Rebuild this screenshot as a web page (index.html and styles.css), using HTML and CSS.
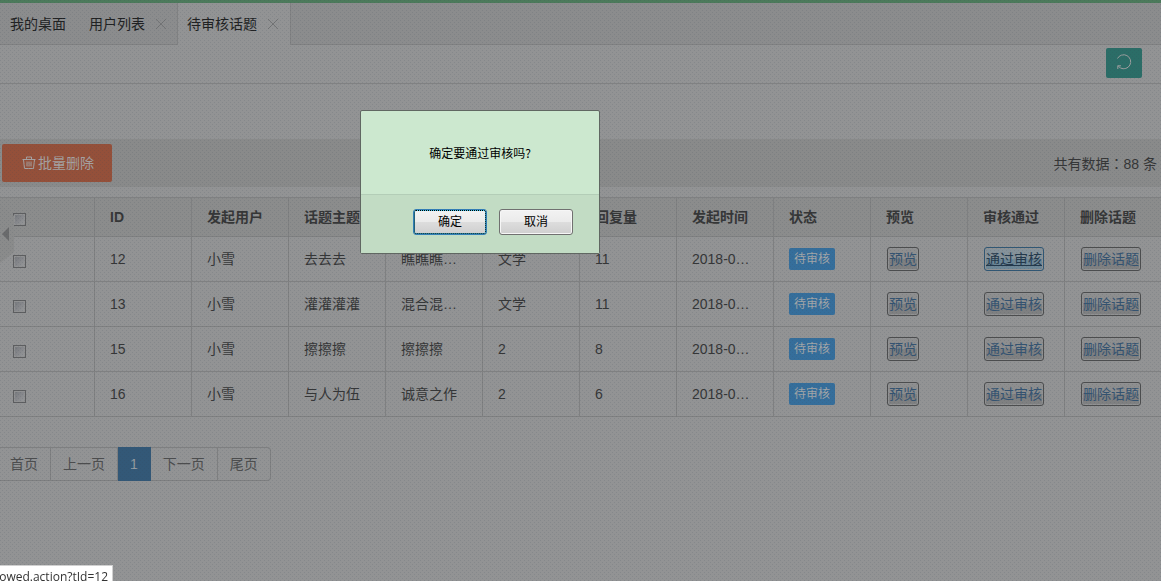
FILE: index.html
```html
<!DOCTYPE html>
<html lang="zh-CN">
<head>
<meta charset="utf-8">
<meta name="viewport" content="width=device-width, initial-scale=1">
<title>待审核话题</title>
<link rel="stylesheet" href="styles.css">
</head>
<body>
<nav class="tabs">
  <button class="tab tab-home" type="button">我的桌面</button>
  <button class="tab" type="button">用户列表<svg class="tab-close" viewBox="0 0 10 10"><path d="M0 0L10 10M10 0L0 10"/></svg></button>
  <button class="tab tab-active" type="button">待审核话题<svg class="tab-close" viewBox="0 0 10 10"><path d="M0 0L10 10M10 0L0 10"/></svg></button>
</nav>
<header class="crumbs">
  <button class="refresh" type="button" aria-label="刷新"><svg viewBox="0 0 16 16"><path d="M1.500 4.500A7 7 0 1 1 4.500 14L1.800 11.800M1.800 15V11.800H5"/></svg></button>
</header>
<main>
  <div class="toolbar">
    <button class="batch" type="button"><svg viewBox="0 0 14 14"><path d="M0.500 3.500H13.500M4.500 3V1H9.500V3M1.500 3.500L2.500 12.500H11.500L12.500 3.500M5 5.500V10.500M7 5.500V10.500M9 5.500V10.500"/></svg>批量删除</button>
    <span class="total">共有数据<span class="colon" lang="zh-TW">：</span>88 条</span>
  </div>
  <table class="topics">
    <thead>
      <tr><th><input type="checkbox" aria-label="全选"></th><th>ID</th><th>发起用户</th><th>话题主题</th><th></th><th></th><th>回复量</th><th>发起时间</th><th>状态</th><th>预览</th><th>审核通过</th><th>删除话题</th></tr>
    </thead>
    <tbody>
      <tr><td><input type="checkbox" aria-label="选择 12"></td><td>12</td><td>小雪</td><td>去去去</td><td>瞧瞧瞧…</td><td>文学</td><td>11</td><td>2018-0…</td><td><span class="label">待审核</span></td><td><a class="act" href="#">预览</a></td><td><a class="act act-hover" href="#">通过审核</a></td><td><a class="act" href="#">删除话题</a></td></tr>
      <tr><td><input type="checkbox" aria-label="选择 13"></td><td>13</td><td>小雪</td><td>灌灌灌灌</td><td>混合混…</td><td>文学</td><td>11</td><td>2018-0…</td><td><span class="label">待审核</span></td><td><a class="act" href="#">预览</a></td><td><a class="act" href="#">通过审核</a></td><td><a class="act" href="#">删除话题</a></td></tr>
      <tr><td><input type="checkbox" aria-label="选择 15"></td><td>15</td><td>小雪</td><td>擦擦擦</td><td>擦擦擦</td><td>2</td><td>8</td><td>2018-0…</td><td><span class="label">待审核</span></td><td><a class="act" href="#">预览</a></td><td><a class="act" href="#">通过审核</a></td><td><a class="act" href="#">删除话题</a></td></tr>
      <tr><td><input type="checkbox" aria-label="选择 16"></td><td>16</td><td>小雪</td><td>与人为伍</td><td>诚意之作</td><td>2</td><td>6</td><td>2018-0…</td><td><span class="label">待审核</span></td><td><a class="act" href="#">预览</a></td><td><a class="act" href="#">通过审核</a></td><td><a class="act" href="#">删除话题</a></td></tr>
    </tbody>
  </table>
  <nav class="pages">
    <a href="#">首页</a><a href="#">上一页</a><a class="current" href="#">1</a><a href="#">下一页</a><a href="#">尾页</a>
  </nav>
</main>
<button class="drawer" type="button" aria-label="收起菜单"><svg viewBox="0 0 14 58"><path class="drawer-bg" d="M0 0L14 11V47L0 58Z"/><path class="drawer-arrow" d="M2 29L9 22V36Z"/></svg></button>
<div class="shade"></div>
<div class="modal">
  <div class="dialog" role="dialog" aria-labelledby="msg">
    <p class="message" id="msg">确定要通过审核吗?</p>
    <div class="buttons"><button class="btn btn-default" type="button">确定</button><button class="btn" type="button">取消</button></div>
  </div>
</div>
<div class="status">owed.action?tId=12</div>
</body>
</html>
```
FILE: styles.css
```css
* { box-sizing: border-box; }
body {
  margin: 0;
  min-height: 100vh;
  overflow: hidden;
  background: #929394;
  color: #353637;
  font: 14px/20px "Liberation Sans", "Noto Sans CJK SC", sans-serif;
}
button { font: inherit; color: inherit; padding: 0; margin: 0; border: 0; background: none; }
svg { fill: none; stroke: currentColor; }
a { color: inherit; text-decoration: none; }

.tabs {
  display: flex;
  height: 45px;
  border-top: 3px solid #4c7a5b;
  border-bottom: 1px solid #808182;
  background: #8b8c8d;
  color: #202122;
}
.tab { display: flex; align-items: center; gap: 11px; padding: 0 11px 0 12px; }
.tab-home { padding-left: 10px; }
.tab-active {
  height: 42px;
  padding: 0 12px 0 9px;
  border-left: 1px solid #808182;
  border-right: 1px solid #808182;
  background: #929394;
}
.tab-close { width: 10px; height: 10px; color: #747576; }

.crumbs {
  display: flex;
  justify-content: flex-end;
  height: 39px;
  padding: 3px 19px 0;
  border-bottom: 1px solid #808182;
}
.refresh {
  display: grid;
  place-items: center;
  width: 36px;
  height: 30px;
  padding-bottom: 2px;
  border-radius: 2px;
  background: #2b6d67;
  color: #9b9e9e;
}
.refresh svg { width: 16px; height: 16px; }

.toolbar {
  display: flex;
  align-items: center;
  justify-content: space-between;
  height: 48px;
  margin-top: 55px;
  padding: 0 4px 0 2px;
  background: #898a8a;
}
.colon { font-family: "Noto Sans CJK TC", sans-serif; }
.batch {
  display: flex;
  align-items: center;
  justify-content: center;
  gap: 2px;
  width: 110px;
  height: 38px;
  padding-left: 2px;
  border-radius: 2px;
  background: #94503a;
  color: #a5a1a1;
}
.batch svg { width: 14px; height: 14px; }

.topics {
  width: 1165px;
  margin-top: 10px;
  margin-left: -3px;
  border-collapse: collapse;
  table-layout: fixed;
}
.topics th, .topics td {
  height: 45px;
  padding: 0 15px;
  border: 1px solid #7f8081;
  text-align: left;
  white-space: nowrap;
}
.topics th { height: 39px; background: #8b8c8c; }
.topics input {
  appearance: none;
  display: block;
  width: 13px;
  height: 13px;
  margin: 4px 0 0;
  border: 1px solid #5d5e60;
  background: linear-gradient(135deg, #74767b, #98999b);
  box-shadow: inset 0 0 0 1px #909192;
}
.label {
  display: inline-block;
  padding: 0 5px;
  border-radius: 2px;
  background: #356e9b;
  color: #a2a5a8;
  font-size: 12px;
  line-height: 22px;
}
.act {
  display: inline-block;
  margin-left: 1px;
  border: 1px solid #4c4d4e;
  border-radius: 3px;
  padding: 0 1px;
  background: linear-gradient(#8d8e8f 50%, #7f8081 50%);
  box-shadow: inset 0 0 0 1px #919293;
  color: #345371;
  line-height: 22px;
}
.act-hover {
  border-color: #305774;
  background: linear-gradient(#85929a 50%, #6d8797 50%);
  color: #23384b;
  text-decoration: underline;
}

.pages { display: flex; margin-top: 30px; color: #4c4d4e; }
.pages a {
  padding: 6px 12px;
  border: 1px solid #7e7f80;
  border-left-width: 0;
}
.pages a:first-child { padding-left: 10px; }
.pages a:last-child { border-radius: 0 4px 4px 0; }
.pages .current { border-color: #335877; background: #335877; color: #939ba1; }

.drawer { position: absolute; left: 0; top: 205px; width: 14px; height: 58px; }
.drawer svg { display: block; stroke: none; }
.drawer-bg { fill: #8a8b8b; }
.drawer-arrow { fill: #6a6b6c; }

.shade {
  position: fixed;
  inset: 0;
  background:
    conic-gradient(from 0deg at 1px 1px, transparent 75%, rgba(60, 72, 90, 0.14) 0) 0 0 / 4px 4px,
    conic-gradient(from 0deg at 1px 1px, transparent 75%, rgba(60, 72, 90, 0.14) 0) 2px 2px / 4px 4px;
}
.modal {
  position: fixed;
  inset: 0;
  display: flex;
  justify-content: center;
  align-items: flex-start;
  padding: 110px 201px 0 0;
  font-size: 12px;
  color: #000;
}
.dialog {
  width: 240px;
  border: 1px solid #606762;
  border-radius: 2px;
  background: #cce8cf;
}
.message {
  margin: 0;
  padding: 32px 0 31px;
  text-align: center;
  line-height: 20px;
  font-family: "Noto Sans CJK SC", sans-serif;
}
.buttons {
  display: flex;
  justify-content: flex-end;
  gap: 12px;
  padding: 14px 26px 18px 0;
  border-top: 1px solid #b3cdb7;
  background: #c2dcc4;
}
.btn {
  width: 74px;
  height: 26px;
  border: 1px solid #707070;
  border-radius: 3px;
  background: linear-gradient(#f2f2f2, #ebebeb 48%, #dddddd 50%, #cfcfcf);
  box-shadow: inset 0 0 0 1px #f6f6f6;
}
.btn-default {
  border-color: #337db5;
  box-shadow: inset 0 0 0 1px #43c5ee;
  outline: 1px dotted #000;
  outline-offset: -2px;
}
.status {
  position: fixed;
  left: 0;
  bottom: 0;
  display: flex;
  justify-content: flex-end;
  width: 113px;
  height: 16px;
  padding: 2px 4px 0 0;
  border: 1px solid #d0d0d0;
  border-width: 1px 1px 0 0;
  background: #fff;
  color: #333;
  font: 12px/18px "Open Sans", sans-serif;
  white-space: nowrap;
}
```
